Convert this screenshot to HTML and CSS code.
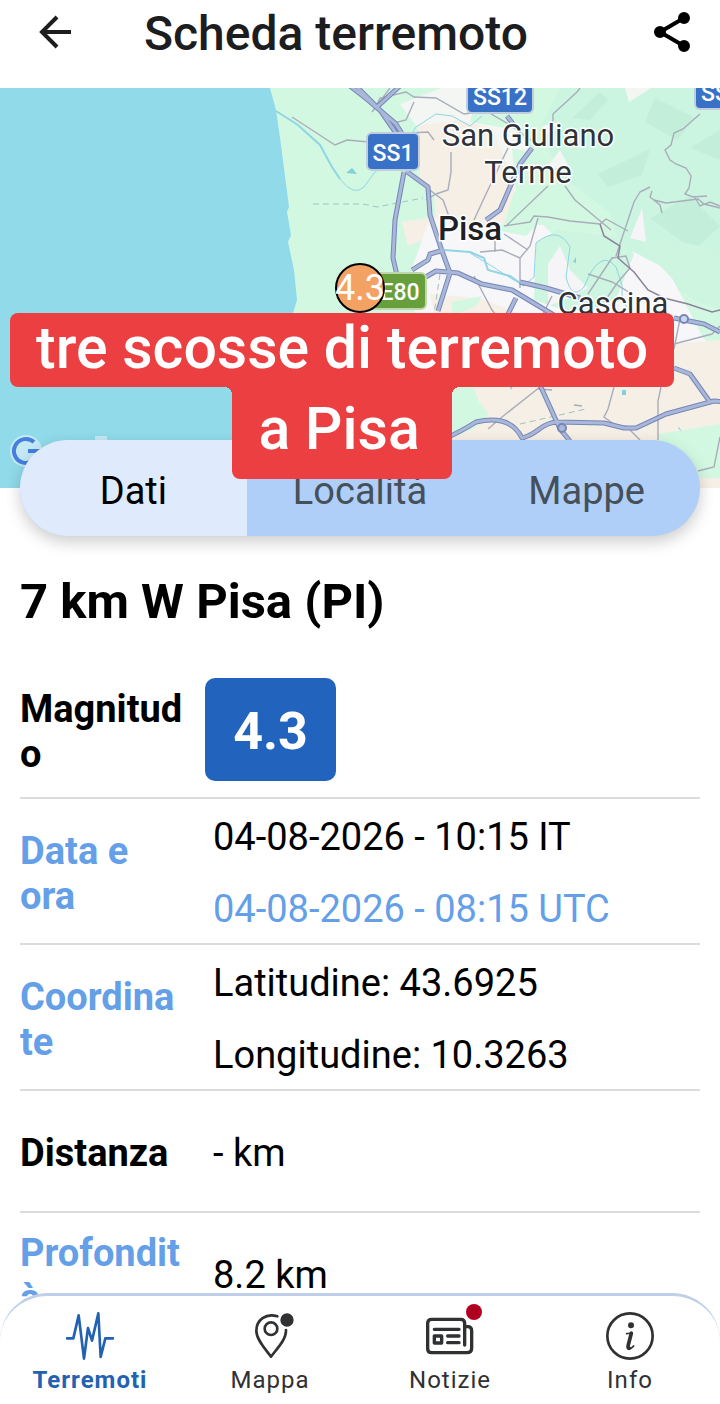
FILE: index.html
```html
<!DOCTYPE html>
<html lang="it">
<head>
    <meta charset="UTF-8">
    <meta name="viewport" content="width=device-width, initial-scale=1.0">
    <title>Scheda terremoto</title>
    <link rel="stylesheet" href="styles.css">
</head>
<body>
<div class="app">
    <header class="topbar">
        <button class="icon-button" type="button" aria-label="Indietro">
            <svg viewBox="0 0 48 48" width="48" height="48" fill="none" stroke="#1d1d1f" stroke-width="4">
                <path d="M27 9 12 24l15 15M11 24h30"/>
            </svg>
        </button>
        <h1>Scheda terremoto</h1>
        <button class="icon-button" type="button" aria-label="Condividi">
            <svg viewBox="0 0 48 48" width="48" height="48" stroke="#000" stroke-width="4">
                <path d="M36 10 12 24l24 14" fill="none"/>
                <circle cx="36" cy="10" r="4"/>
                <circle cx="12" cy="24" r="4"/>
                <circle cx="36" cy="38" r="4"/>
            </svg>
        </button>
    </header>

    <main class="content">
        <div class="map">
            <svg class="map-canvas" viewBox="0 0 720 400" preserveAspectRatio="xMidYMid slice" role="img" aria-label="Mappa dell'epicentro">
                <rect width="720" height="400" fill="#90daea"/>
                <!-- land -->
                <path fill="#d3f8e2" d="M270 0l6 22 5 35 8 62-2 5 4 23-3 7 6 28 3 30-4 13-40 50v125h477V0z"/>
                <path fill="#cbf5e0" d="M560 0h160v215l-60-18-38-32-12-40-50-38-20-47z"/>
                <path fill="#c3efda" d="M655 10l40 20-18 22-32-18zM598 86l52-25-8 26-34 12zM650 130l40-22 30 30-26 24zM572 30l28-26 8 8-18 20zM690 60l30-18v30z"/>
                <path fill="#f3f6f3" d="M400 16l42-16h36l-8 34 48 8 16 26-18 36-60-18-34-40zM542 38l18-4-12 12zM625 0h26l-22 14zM548 78l12-16 12 22z"/>
                <path fill="#f5efe6" d="M418 38l40-6 34 8 24 58-12 38-38 10-30-12-2-28-14-16zM402 134l36-6-10 22-20 8z"/>
                <path fill="#f7f6f9" d="M412 180l18-50 56 10 40 8 14-14 24 24 70 6 34 18 34 66 18 22H440l-26-48z"/>
                <path fill="#cdf5e0" d="M536 154l22-12 56 6 20 18-20 50-44 8-36-12zM625 164l14-8 54 56 27 10v-60l-60-12z"/>
                <path fill="#d3f8e2" d="M512 60l24 6 14 30 8 42-34-2-8-34z"/>
                <path fill="#f5f4f6" d="M548 176l12-18 10 24 18 18-18 10-22 8zM630 150l12-30 4 34z"/>
                <path fill="#f5efe6" d="M430 206l50 4 60 24 80 8 54 14 46-4v148H440V250z"/>
                <path fill="#d3f8e2" d="M448 299h26l5 15 10 12-14 14-27 12zM658 346l62-10v54h-30l-28-26zM452 214l30-6-6 10-24 10zM604 226l28-6-10 16z"/>

                <!-- water -->
                <g fill="none" stroke="#8fd5e4" stroke-width="1">
                    <path stroke-width="2" d="M276 23l22 14 22 20 12 22 8 12"/>
                    <path d="M340 91q14 18 24 8l10-14 26-22 16-24 20-13 16 2 18 10 12-10M470 165l20 12 22 14 12 6 10-8 2-34q22-18 34 4l-4 30q6 24 18 10 16-40 32-20l6 18v16l10 12 26 12"/>
                    <path stroke-width="2" d="M444 162l26 2 14 6 4 12 22 6 14 10"/>
                </g>
                <path fill="#83cfda" d="M346 85l6-5 5 6zM508 294l3 8 2-4zM622 302h4v5h-4zM573 174l3-5v6zM678 340l4 4-3-5z"/>

                <!-- minor roads -->
                <g fill="none" stroke="#a9adba" stroke-width="1.4">
                    <path d="M292 29l43 28 12-5 22 2M390 0l-18 24M374 22l6-12 26-6 8 5 22 1 28 16 22-3 24 14 22 16M390 36l16-4 8-18M396 52l14-7 18-1 6 8"/>
                    <path d="M451 64v20l-3 18-12 4-10 6M427 100l16 12 8 22M508 60l-22 46-12 26M580 0l-3 4-24 22v8"/>
                    <path d="M504 138l26-4 4-6 14 1 22 4 30 3 6-5 22 12M504 146l24 16M538 130l-8 28-10 12v30M495 150v14M480 164l22-2 18 8M565 98l10 14 36 30M506 138l42-40"/>
                    <path d="M588 206l24-36 14-2 4 12-12 14-14 20M700 26l-17 15-9 4-3 12-6 5 5 10 6 4 10 4 5 8-2 12-4 6 8 3 14-1M616 168l18-54 6-10 10-5M652 103l-2 6 10 8 2 8M654 112l12 3 16-2 16-2 6 5 16 4M694 108l6 10 10-4 10 4"/>
                    <path d="M474 188l18 34 22 26M588 186l24 8 20 12M540 232l12-24"/>
                    <path d="M540 299l-38 30-14 12M614 299l-6 22-4 8 14 10 8-1 6 6 8 8M661 299l-3 14v39M680 231l-6 30M674 256l38-10 8-8M698 383l16-4 6-30M538 301l14 1M574 317l8 1"/>
                </g>
                <path fill="none" stroke="#8b8398" stroke-width="1.5" d="M600 136l4 12 16 10-2 12 16 14 14 18 16 8 24 6 24 8 8-2"/>
                <path fill="none" stroke="#a0c4bb" stroke-dasharray="6 4" d="M313 116h50l14 3 46-9M440 186l-6 40M520 336l66-15"/>

                <!-- highways: casing, then fill -->
                <g fill="none" stroke-linejoin="round" stroke="#7687b5">
                    <path stroke-width="5" d="M350-8l30 30 18 26M350-2l18 14 28 24 10 16M376 20l26-24M404 84l-9 48-2 38 6 26M406 83l22 16 2 28 12 36 8 22-12 38M444 162l-14 4-2 6-16 10M424 190l12-7 22 2 24 11 30 6 30 18 30 18M516 210l-12 24M507 28l6 8M532 60l-12 16-20 46-14 10M520 194l26 6 34 10M674 230l30 6 16 8"/>
                    <path stroke-width="5" d="M446 350q14-6 30-16 34-8 46 16 8-2 16-8 10-8 20-8l46 1 20 5h12l30-14 48-13 12 1M540 297l20 44 10 12M674 280l16 6 20 28"/>
                    <g stroke="#a9b7da" stroke-width="3">
                        <path d="M350-8l30 30 18 26M350-2l18 14 28 24 10 16M376 20l26-24M404 84l-9 48-2 38 6 26M406 83l22 16 2 28 12 36 8 22-12 38M444 162l-14 4-2 6-16 10M424 190l12-7 22 2 24 11 30 6 30 18 30 18M516 210l-12 24M507 28l6 8M532 60l-12 16-20 46-14 10M520 194l26 6 34 10M674 230l30 6 16 8"/>
                        <path d="M446 350q14-6 30-16 34-8 46 16 8-2 16-8 10-8 20-8l46 1 20 5h12l30-14 48-13 12 1M540 297l20 44 10 12M674 280l16 6 20 28"/>
                    </g>
                    <circle cx="684" cy="231" r="4" stroke-width="2" fill="#cdd7ee"/>
                    <circle cx="562" cy="340" r="4" stroke-width="2" fill="#a9b7da"/>
                </g>

                <!-- road shields -->
                <g class="shield">
                    <rect x="367" y="45" width="52" height="37" rx="5" fill="#3871c6" stroke="#c1cddd" stroke-width="2"/>
                    <text x="393" y="73">SS1</text>
                    <rect x="467" y="-12" width="66" height="37" rx="5" fill="#3871c6" stroke="#c1cddd" stroke-width="2"/>
                    <text x="500" y="17">SS12</text>
                    <rect x="695" y="-16" width="66" height="37" rx="5" fill="#3871c6" stroke="#c1cddd" stroke-width="2"/>
                    <text x="728" y="13">SS12</text>
                    <rect x="362" y="185" width="64" height="36" rx="5" fill="#679f3c" stroke="#c1d6ad" stroke-width="2"/>
                    <text x="400" y="212">E80</text>
                </g>

                <!-- places -->
                <g class="place">
                    <text x="528" y="58">San Giuliano</text>
                    <text x="528" y="95">Terme</text>
                    <text x="613" y="226">Cascina</text>
                    <text class="city" x="470" y="152">Pisa</text>
                </g>

                <!-- epicentre -->
                <circle cx="360" cy="200" r="24" fill="#f3a264" stroke="#000" stroke-width="2"/>
                <text class="epicentre" x="360" y="212">4.3</text>

                <!-- map provider mark -->
                <g fill="none">
                    <circle cx="26" cy="363" r="16" fill="#c5e8f5"/>
                    <path stroke="#4580df" stroke-width="4" d="M34 354a12 12 0 1 0 4 9H28"/>
                    <path stroke="#c5e8f5" stroke-width="12" d="M101 348v12"/>
                </g>
            </svg>
            <div class="caption">
                <span class="caption-line">tre scosse di terremoto</span>
                <span class="caption-line caption-last">a Pisa</span>
            </div>
        </div>

        <div class="tabs" role="tablist">
            <button class="tab active" type="button" role="tab" aria-selected="true">Dati</button>
            <button class="tab" type="button" role="tab" aria-selected="false">Località</button>
            <button class="tab" type="button" role="tab" aria-selected="false">Mappe</button>
        </div>

        <section class="details">
            <h2>7 km W Pisa (PI)</h2>
            <table>
                <tr>
                    <th scope="row">Magnitudo</th>
                    <td class="magnitude-cell"><span class="magnitude">4.3</span></td>
                </tr>
                <tr>
                    <th scope="row" class="blue">Data e ora</th>
                    <td><div>04-08-2026 - 10:15 IT</div><div class="blue">04-08-2026 - 08:15 UTC</div></td>
                </tr>
                <tr>
                    <th scope="row" class="blue">Coordinate</th>
                    <td><div>Latitudine: 43.6925</div><div>Longitudine: 10.3263</div></td>
                </tr>
                <tr>
                    <th scope="row">Distanza</th>
                    <td>- km</td>
                </tr>
                <tr>
                    <th scope="row" class="blue">Profondità</th>
                    <td>8.2 km</td>
                </tr>
            </table>
        </section>
    </main>

    <nav class="bottom-nav">
        <a class="nav-item selected" href="#terremoti">
            <svg class="nav-icon" viewBox="0 0 144 144">
                <path d="M3 79h19L38 10l16 130 12-92 12 38L97 4l7 131 14-56h23"/>
            </svg>
            <span>Terremoti</span>
        </a>
        <a class="nav-item" href="#mappa">
            <svg class="nav-icon" viewBox="0 0 144 144">
                <path d="M94 13C60 2 31 24 31 56c0 28 29 57 44 78 17-23 46-51 45-80"/>
                <circle cx="75" cy="50" r="19"/>
                <circle cx="123" cy="24" r="16" fill="currentColor"/>
            </svg>
            <span>Mappa</span>
        </a>
        <a class="nav-item" href="#notizie">
            <span class="icon-wrap">
                <svg class="nav-icon bold" viewBox="0 0 144 144">
                    <path d="M116 99V34q0-12-12-12H17Q5 22 5 34v76q0 12 12 12h106q14 0 14-14V56q0-12-12-12h-8M25 52h74M65 72h34M65 92h34M25 72h22v21H25z"/>
                </svg>
                <i class="badge"></i>
            </span>
            <span>Notizie</span>
        </a>
        <a class="nav-item" href="#info">
            <svg class="nav-icon" viewBox="0 0 144 144">
                <circle cx="72" cy="72" r="68"/>
                <circle cx="75" cy="40" r="5" fill="currentColor"/>
                <path d="M62 65q8 0 14-4" stroke-width="5"/>
                <path d="M76 64l-9 34q-3 11 3 11" stroke-width="11"/>
                <path d="M69 110q8 0 14-8" stroke-width="5"/>
            </svg>
            <span>Info</span>
        </a>
    </nav>
</div>
</body>
</html>
```
FILE: styles.css
```css
* { box-sizing: border-box; }
body { margin: 0; font-family: Roboto, "Liberation Sans", sans-serif; background: #fff; color: #000; }
button { font-family: inherit; border: none; cursor: pointer; }
.app { height: 100vh; display: flex; flex-direction: column; overflow: hidden; }

/* Top bar */
.topbar { flex: none; display: flex; align-items: center; height: 88px; padding: 0 24px 24px; }
.topbar h1 { flex: 1; margin: 0 0 0 66px; padding-top: 4px; font-size: 48px; font-weight: 500; line-height: 60px; color: #1d1d1f; white-space: nowrap; }
.icon-button { display: flex; padding: 0; background: none; }
.icon-button:first-child { padding-left: 6px; }

/* Scrolling area, runs under the rounded nav */
.content { flex: 1; min-height: 0; overflow-y: auto; scrollbar-width: none; }

/* Map */
.map { position: relative; height: 400px; }
.map-canvas { display: block; width: 100%; height: 100%; }
.map-canvas text { text-anchor: middle; }
.shield text { font-size: 23px; font-weight: 500; fill: #fff; }
.place text { font-size: 31px; fill: #2f3338; stroke: #fff; stroke-width: 3px; paint-order: stroke; }
.place .city { font-size: 33px; font-weight: 500; fill: #202124; }
.map-canvas .epicentre { font-size: 36px; fill: #fff; }

.caption { position: absolute; z-index: 2; top: 225px; left: 10px; display: flex; flex-direction: column; align-items: center; color: #fff; font-size: 59px; font-weight: 500; white-space: nowrap; }
.caption-line { padding: 0 26px 4px; line-height: 70px; background: #eb3f42; border-radius: 8px; }
.caption-last { position: relative; padding: 0 32px 8px 26px; line-height: 84px; border-radius: 0 0 8px 8px; }
.caption-last::before, .caption-last::after { content: ""; position: absolute; top: 0; width: 8px; height: 8px; }
.caption-last::before { right: 100%; background: radial-gradient(circle at 0 100%, transparent 8px, #eb3f42 8px); }
.caption-last::after { left: 100%; background: radial-gradient(circle at 100% 100%, transparent 8px, #eb3f42 8px); }

/* Tabs */
.tabs { position: relative; display: flex; height: 96px; margin: -48px 20px 0; border-radius: 48px; overflow: hidden; background: #afcef8; box-shadow: 0 6px 16px rgba(0, 0, 0, 0.2); }
.tab { flex: 1; padding: 6px 0 0; font-size: 38px; color: #455058; background: none; }
.tab.active { color: #000; background: #dfebfc; }

/* Details */
.details { padding: 36px 20px 24px; }
.details h2 { margin: 0 0 30px; font-size: 49px; line-height: 60px; font-weight: 700; }
table { width: 100%; table-layout: fixed; border-collapse: collapse; font-size: 38px; line-height: 45px; }
tr { height: 122px; border-bottom: 2px solid #dcdcdc; }
th { width: 185px; padding: 5px 22px 0 0; text-align: left; font-weight: 700; overflow-wrap: anywhere; }
td { padding: 16px 0 11px 8px; }
td div + div { margin-top: 27px; }
.blue { color: #649fe8; }
.magnitude-cell { padding: 16px 0; }
.magnitude { display: block; width: 131px; padding-top: 5px; border-radius: 10px; background: #2264bd; color: #fff; font-size: 52px; font-weight: 700; line-height: 98px; text-align: center; }

/* Bottom navigation */
.bottom-nav { position: relative; flex: none; display: flex; height: 111px; margin-top: -28px; padding-top: 16px; background: #fff; border-top: 3px solid #bfcfea; border-radius: 48px 48px 0 0; }
.nav-item { flex: 1; display: flex; flex-direction: column; align-items: center; gap: 6px; color: #303133; font-size: 24px; line-height: 28px; letter-spacing: 1px; text-decoration: none; }
.nav-item.selected { color: #2262b0; font-weight: 700; }
.nav-icon { display: block; width: 48px; height: 48px; fill: none; stroke: currentColor; stroke-width: 8; stroke-linecap: round; stroke-linejoin: round; }
.nav-icon.bold { stroke-width: 10; }
.icon-wrap { position: relative; }
.badge { position: absolute; top: -8px; right: -8px; width: 16px; height: 16px; border-radius: 50%; background: #b00020; }
```
